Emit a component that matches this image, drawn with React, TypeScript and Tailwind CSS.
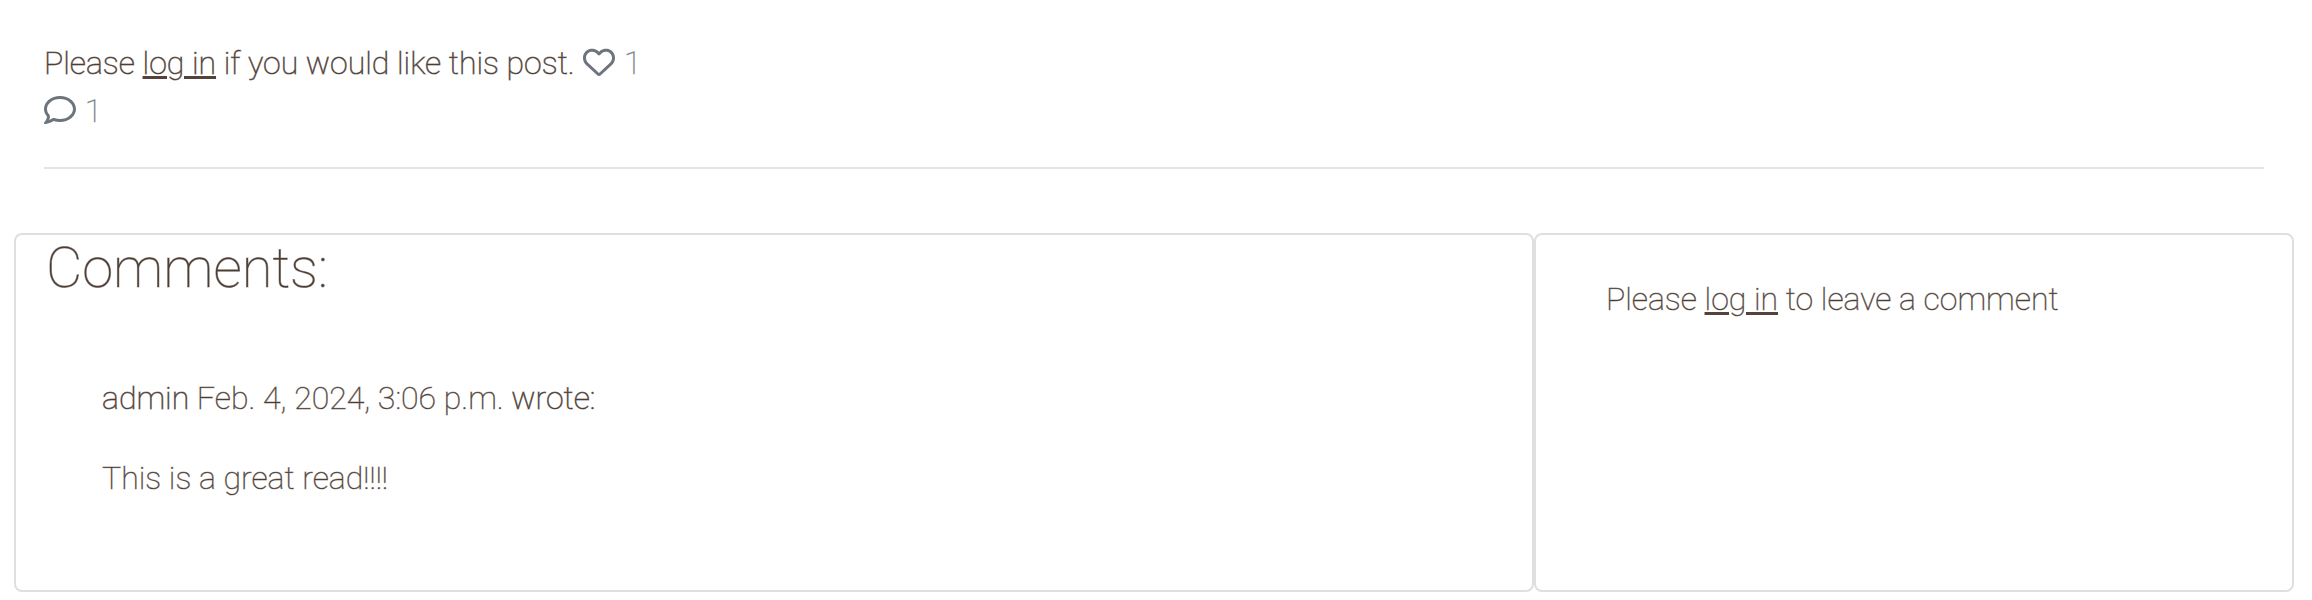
import React from "react";
import { FaRegComment, FaRegHeart } from "react-icons/fa6";

function LoginLink() {
  return (
    <a href="#login" className="underline decoration-[#54433a] decoration-3">
      log in
    </a>
  );
}

export default function App() {
  return (
    <main className="bg-white pr-[18px] pl-[14px] font-['Roboto',sans-serif] text-[32px] leading-[48px] font-thin text-[#4c3d35] [-webkit-text-stroke:1px_#4c3d3573]">
      <section className="px-[30px] pt-[39px]">
        <div className="[-webkit-text-stroke:1px_#4c3d3599]">
          Please <LoginLink /> if you would like this post.{" "}
          <span className="text-[#6c757d] [-webkit-text-stroke:1px_#6c757d59]">
            <FaRegHeart aria-hidden="true" className="mx-px inline align-[-4px]" /> 1
          </span>
        </div>
        <div className="text-[#6c757d] [-webkit-text-stroke:1px_#6c757d59]">
          <FaRegComment aria-hidden="true" className="mr-px inline align-[-4px]" /> 1
        </div>
        <hr className="mt-[32px] border-t-2 border-[#e4e4e4]" />
      </section>
      <div className="mt-[64px] grid grid-cols-3">
        <section className="col-span-2 rounded-lg border-2 border-[#dfdfdf] px-[30px] pb-[88px]">
          <h3 className="text-[56px] leading-[67px]">Comments:</h3>
          <div className="mt-[72px] pl-[56px]">
            <p className="[-webkit-text-stroke:1px_#4c3d3599]">
              admin{" "}
              <span className="[-webkit-text-stroke:1px_#4c3d3573]">
                Feb. 4, 2024, 3:06 p.m.
              </span>{" "}
              wrote:
            </p>
            <p className="mt-[32px]">This is a great read!!!!</p>
          </div>
        </section>
        <section className="rounded-lg border-2 border-[#dfdfdf] px-[70px] pt-[40px]">
          <p>
            Please <LoginLink /> to leave a comment
          </p>
        </section>
      </div>
    </main>
  );
}
